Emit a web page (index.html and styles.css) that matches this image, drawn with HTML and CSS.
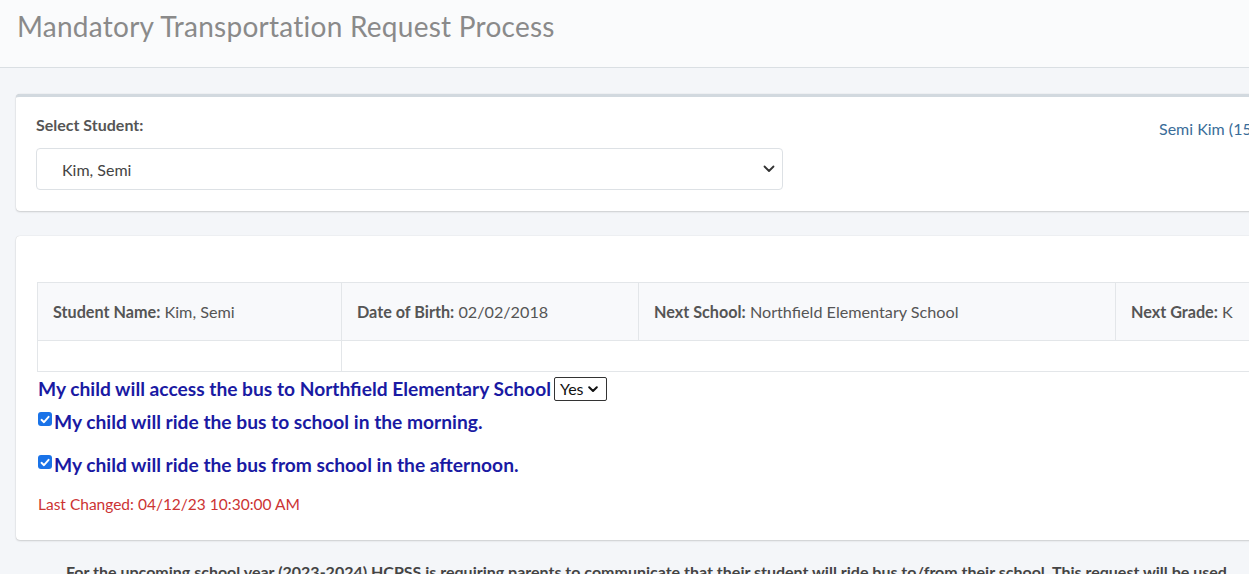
FILE: index.html
```html
<!DOCTYPE html>
<html>
<head>
<meta charset="utf-8">
<link rel="stylesheet" href="styles.css">
</head>
<body>
<div class="page">
  <header class="page-header">
    <h1 class="title">Mandatory Transportation Request Process</h1>
  </header>
  <main class="content">
    <section class="card card-select">
      <div class="select-grid">
        <div class="select-col">
          <label class="select-label">Select Student:</label>
          <div class="select-box">
            <span class="select-value">Kim, Semi</span>
            <svg class="chev" width="12" height="8" viewBox="0 0 12 8"><path d="M1.5 1.5 L6 6 L10.5 1.5" fill="none" stroke="#333" stroke-width="1.8" stroke-linecap="round" stroke-linejoin="round"/></svg>
          </div>
        </div>
        <div class="student-link">Semi Kim (1545872)</div>
      </div>
    </section>
    <section class="card card-main">
      <table class="info">
        <tr class="info-head">
          <td class="c1"><b>Student Name:</b> Kim, Semi</td>
          <td class="c2"><b>Date of Birth:</b> 02/02/2018</td>
          <td class="c3"><b>Next School:</b> Northfield Elementary School</td>
          <td class="c4"><b>Next Grade:</b> K</td>
        </tr>
        <tr class="info-empty">
          <td class="c1"></td>
          <td colspan="3"></td>
        </tr>
      </table>
      <div class="question">
        <span>My child will access the bus to Northfield Elementary School</span>
        <span class="mini-select">Yes <svg width="10" height="7" viewBox="0 0 10 7"><path d="M1.2 1.2 L5 5 L8.8 1.2" fill="none" stroke="#111" stroke-width="2" stroke-linecap="round" stroke-linejoin="round"/></svg></span>
      </div>
      <div class="check-line">
        <span class="cbox"><svg width="10" height="9" viewBox="0 0 10 9"><path d="M1.5 4.8 L4 7.2 L8.6 1.8" fill="none" stroke="#fff" stroke-width="1.9" stroke-linecap="round" stroke-linejoin="round"/></svg></span>
        <span>My child will ride the bus to school in the morning.</span>
      </div>
      <div class="check-line second">
        <span class="cbox"><svg width="10" height="9" viewBox="0 0 10 9"><path d="M1.5 4.8 L4 7.2 L8.6 1.8" fill="none" stroke="#fff" stroke-width="1.9" stroke-linecap="round" stroke-linejoin="round"/></svg></span>
        <span>My child will ride the bus from school in the afternoon.</span>
      </div>
      <div class="last-changed">Last Changed: 04/12/23 10:30:00 AM</div>
    </section>
    <p class="notice">For the upcoming school year (2023-2024) HCPSS is requiring parents to communicate that their student will ride bus to/from their school. This request will be used</p>
  </main>
</div>
</body>
</html>
```
FILE: styles.css
```css
* { box-sizing: border-box; }
html, body { margin: 0; padding: 0; }
body {
  font-family: "Lato", "Open Sans", sans-serif;
  background: #f4f6f9;
  color: #555;
  width: 1249px;
  height: 574px;
  overflow: hidden;
}
.page { width: 1249px; overflow: hidden; }
.page-header {
  height: 68px;
  background: #fafbfc;
  border-bottom: 1px solid #dadfe3;
  padding: 9px 17px 0;
}
.title {
  margin: 0;
  font-weight: 400;
  font-size: 28px;
  line-height: 34px;
  color: #8a8a8a;
  letter-spacing: 0.25px;
}
.content { padding: 26px 0 0 16px; }
.card {
  width: 1500px;
  background: #fff;
  border-radius: 4px;
  box-shadow: 0 0 1px rgba(0,0,0,.2), 0 1px 2px rgba(0,0,0,.15);
}
.card-select {
  border-top: 3px solid #d2d9df;
  height: 117px;
  padding: 18px 20px 0 20px;
}
.select-grid { display: flex; }
.select-col { width: 747px; display: flex; flex-direction: column; }
.select-label {
  font-weight: 700;
  font-size: 16px;
  line-height: 20px;
  color: #555;
  margin-bottom: 13px;
}
.select-box {
  height: 42px;
  border: 1px solid #dde1e5;
  border-radius: 4px;
  display: flex;
  align-items: center;
  padding: 0 7px 0 25px;
  font-size: 16px;
  color: #444;
}
.select-value { flex: 1; }
.student-link {
  margin-left: 376px;
  margin-top: 4px;
  font-size: 16px;
  color: #3a6d99;
}
.card-main {
  margin-top: 25px;
  height: 304px;
  padding: 46px 21px 0 21px;
}
.info {
  border-collapse: collapse;
  width: 1300px;
  table-layout: fixed;
  font-size: 16.2px;
  color: #555;
}
.info td {
  border: 1px solid #e3e6e9;
  padding: 0 0 0 15px;
}
.info b { font-weight: 700; }
.info-head { height: 58px; background: #f8f9fb; }
.info-empty { height: 31px; }
.c1 { width: 304px; }
.c2 { width: 297px; }
.c3 { width: 477px; }
.question {
  margin-top: 5px;
  display: flex;
  align-items: center;
  font-size: 19.2px;
  font-weight: 700;
  color: #1a1aa3;
  line-height: 24px;
  padding-left: 1px;
}
.mini-select {
  margin-left: 3px;
  height: 24px;
  width: 53px;
  border: 1px solid #333;
  border-radius: 2px;
  font-size: 16px;
  font-weight: 400;
  color: #111;
  display: inline-flex;
  align-items: center;
  gap: 4px;
  padding-left: 5px;
}
.check-line {
  margin-top: 9px;
  display: flex;
  align-items: center;
  font-size: 19.2px;
  font-weight: 700;
  color: #1a1aa3;
  line-height: 24px;
  padding-left: 1px;
}
.check-line.second { margin-top: 19px; }
.cbox {
  width: 14px;
  height: 14px;
  border-radius: 3px;
  background: #1a73e8;
  display: inline-flex;
  align-items: center;
  justify-content: center;
  margin-right: 2px;
  margin-top: -6px;
}
.last-changed {
  margin-top: 18px;
  font-size: 15.5px;
  color: #cc3333;
  padding-left: 1px;
}
.notice {
  margin: 22px 0 0 50px;
  font-weight: 700;
  font-size: 16px;
  color: #444;
  white-space: nowrap;
}
```
